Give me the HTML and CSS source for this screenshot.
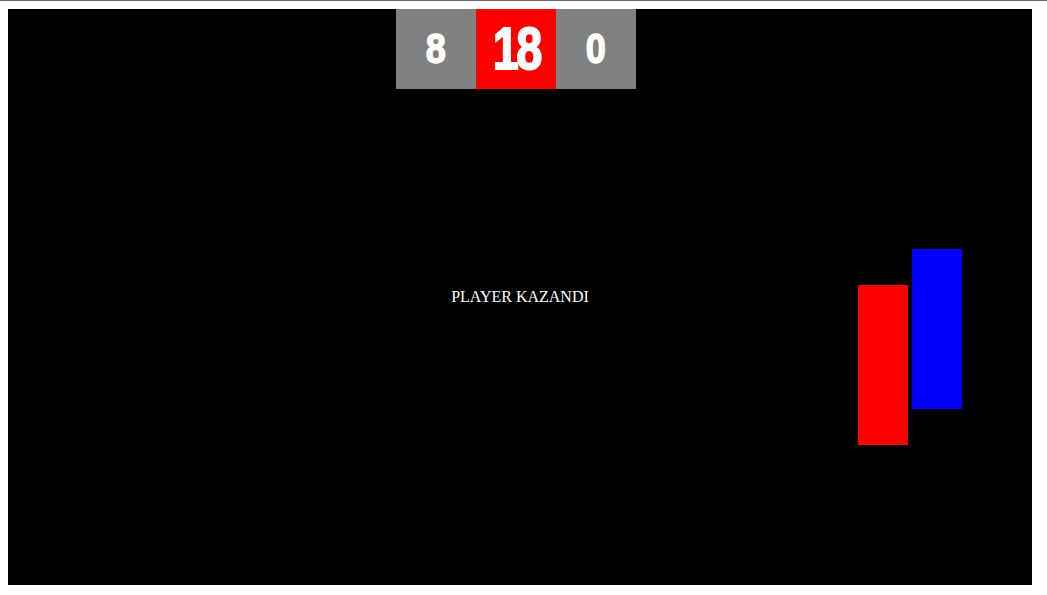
FILE: index.html
```html
<!DOCTYPE html>
<html lang="tr">
<head>
<meta charset="utf-8">
<title>Pong</title>
<link rel="stylesheet" href="styles.css">
</head>
<body>
<div class="game">
  <div class="scoreboard">
    <div class="score score-side"><span class="digits">8</span></div>
    <div class="score score-main"><span class="digits">18</span></div>
    <div class="score score-side"><span class="digits">0</span></div>
  </div>
  <div class="message">PLAYER KAZANDI</div>
  <div class="paddle paddle-red"></div>
  <div class="paddle paddle-blue"></div>
</div>
</body>
</html>
```
FILE: styles.css
```css
html {
  border-top: 1px solid #666666;
  background: #ffffff;
}
body {
  margin: 8px;
  font-family: "Liberation Serif", "Times New Roman", serif;
}
.game {
  position: relative;
  width: 1024px;
  height: 576px;
  background: #000000;
  overflow: hidden;
}
.scoreboard {
  position: absolute;
  left: 388px;
  top: 0;
  display: flex;
}
.score {
  width: 80px;
  height: 80px;
  display: flex;
  align-items: center;
  justify-content: center;
  color: #ffffff;
  font-family: "Liberation Sans", Arial, sans-serif;
  font-weight: bold;
  line-height: 1;
}
.digits {
  display: inline-block;
  -webkit-text-stroke: 1.5px #ffffff;
}
.score-side {
  background: #808080;
  font-size: 42px;
}
.score-side .digits {
  transform: scaleX(0.86);
}
.score-main {
  background: #ff0000;
  font-size: 60px;
}
.score-main .digits {
  letter-spacing: -3px;
  transform: scaleX(0.78);
  -webkit-text-stroke: 2px #ffffff;
}
.message {
  position: absolute;
  left: 0;
  right: 0;
  top: 278px;
  text-align: center;
  color: #ffffff;
  font-size: 16px;
  line-height: 20px;
}
.paddle {
  position: absolute;
  width: 50px;
  height: 160px;
}
.paddle-red {
  left: 850px;
  top: 276px;
  background: #ff0000;
}
.paddle-blue {
  left: 904px;
  top: 240px;
  background: #0000ff;
}
```
